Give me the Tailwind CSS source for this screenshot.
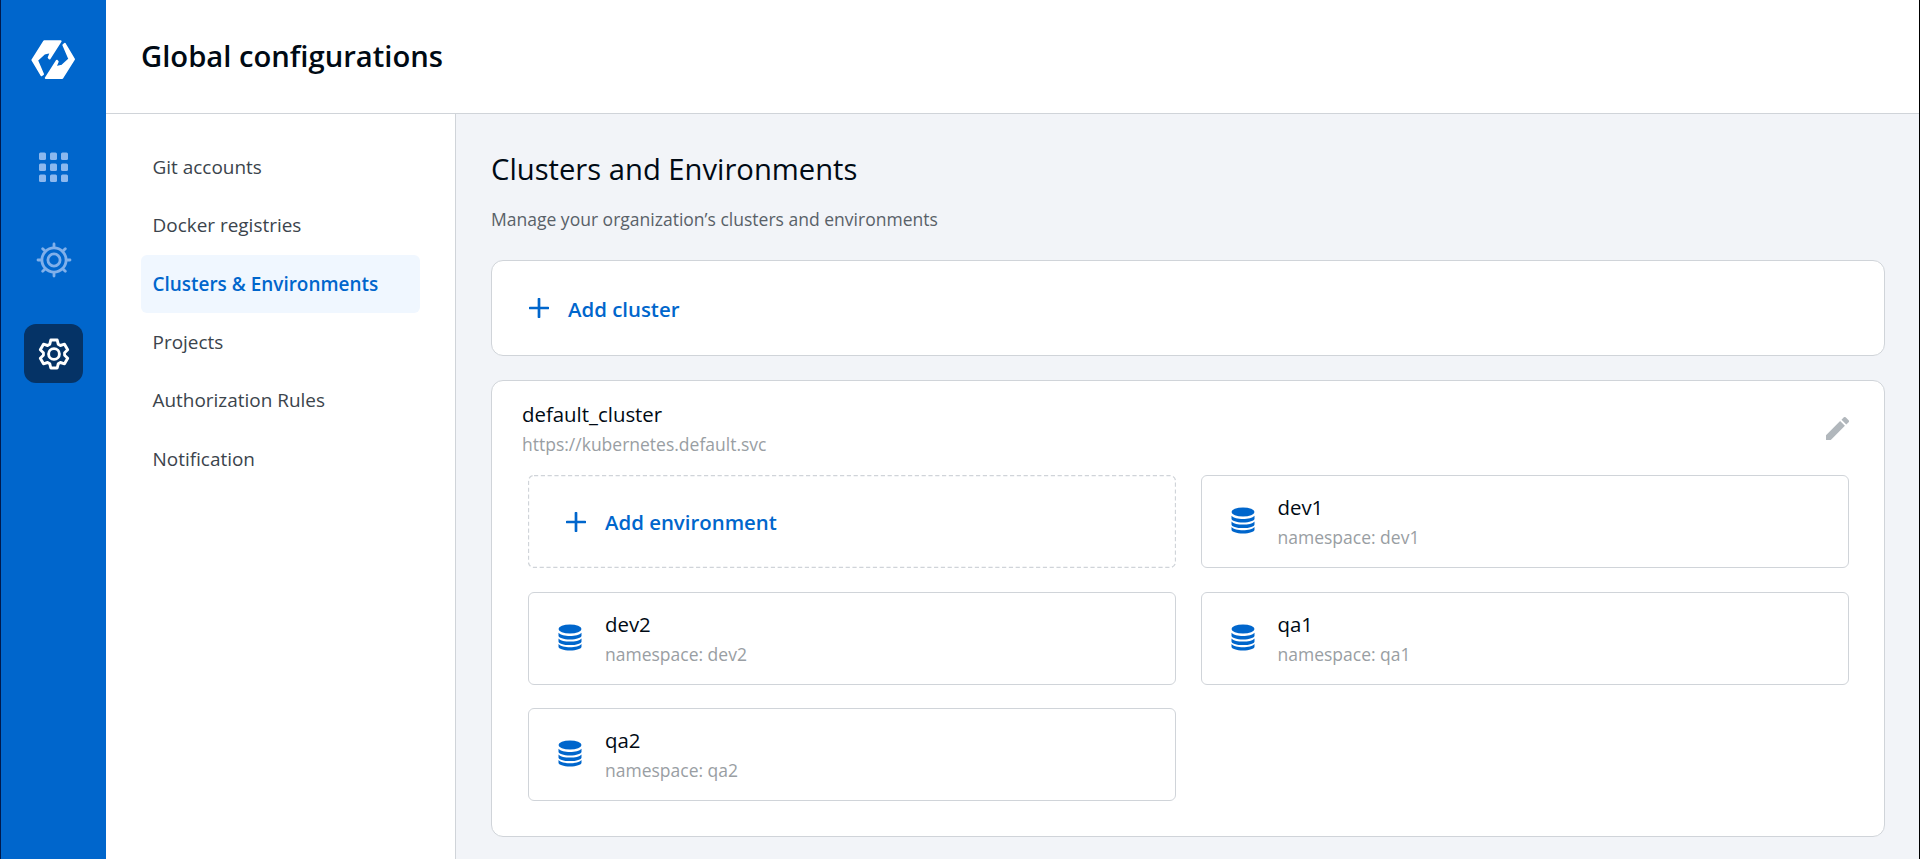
<!DOCTYPE html>
<html lang="en">
<head>
<meta charset="utf-8">
<title>Global configurations</title>
<script src="https://cdn.jsdelivr.net/npm/@tailwindcss/browser@4"></script>
</head>
<body class="flex h-[859px] w-[1920px] overflow-hidden border-l border-r border-l-[#001a4d] border-r-black bg-white font-['Open_Sans',sans-serif] text-[#000a14]">
  <svg class="hidden">
    <symbol id="db" viewBox="0 0 24 27">
      <ellipse cx="12" cy="5" rx="11.5" ry="4.6"/>
      <path d="M.5 8.8C2.5 11 7 12 12 12s9.500-1 11.500-3.200v3c0 2-5 3.700-11.500 3.700S.5 13.800.5 11.800z"/>
      <path d="M.5 14.400c2 2.200 6.500 3.200 11.500 3.200s9.500-1 11.500-3.200v3c0 2-5 3.700-11.500 3.700S.5 19.400.5 17.400z"/>
      <path d="M.5 20c2 2.200 6.500 3.200 11.500 3.200s9.500-1 11.500-3.200v2.800c0 2-5 3.700-11.500 3.700S.5 24.800.5 22.800z"/>
    </symbol>
    <symbol id="plus" viewBox="0 0 20 20">
      <path d="M10 1v18M1 10h18" fill="none" stroke="currentColor" stroke-width="2.700" stroke-linecap="round"/>
    </symbol>
  </svg>

  <aside class="flex w-[105px] shrink-0 flex-col items-center bg-[#0066cc]">
    <svg class="mt-[39px] mr-px h-[41px] w-[46px] shrink-0" viewBox="0 0 46 41" fill="#fff" stroke="#fff" stroke-width="2" stroke-linejoin="round">
      <path id="half" d="M14.200 2.200H30.600L19.600 19.500 18.700 18.600 21 13 14.400 14.500 7 21.200 13 35.200 11.500 36.300 2.400 21z"/>
      <use href="#half" transform="rotate(180 23.200 20.600)"/>
    </svg>
    <svg class="mt-[72px] h-[31px] w-[29px] shrink-0" viewBox="0 0 29 31" fill="#8cb8ee">
      <rect x="0" y="0.500" width="7" height="7.500" rx="1.500"/><rect x="11" y="0.500" width="7" height="7.500" rx="1.500"/><rect x="22" y="0.500" width="7" height="7.500" rx="1.500"/>
      <rect x="0" y="11.500" width="7" height="7.500" rx="1.500"/><rect x="11" y="11.500" width="7" height="7.500" rx="1.500"/><rect x="22" y="11.500" width="7" height="7.500" rx="1.500"/>
      <rect x="0" y="22.500" width="7" height="7.500" rx="1.500"/><rect x="11" y="22.500" width="7" height="7.500" rx="1.500"/><rect x="22" y="22.500" width="7" height="7.500" rx="1.500"/>
    </svg>
    <svg class="mt-[59px] h-9 w-9 shrink-0" viewBox="-18 -18 36 36" fill="none" stroke="#80b0ea" stroke-width="2.800" stroke-linecap="round">
      <circle r="12.100"/><circle r="6.100"/>
      <path d="M0-12.300V-16M0 12.300V16M-12.300 0H-16M12.300 0H16M8.700-8.700l2.600-2.600M-8.700-8.700l-2.600-2.600M8.700 8.700l2.600 2.600M-8.700 8.700l-2.600 2.600"/>
    </svg>
    <div class="mt-[46px] flex h-[59px] w-[59px] shrink-0 items-center justify-center rounded-xl bg-[#053366]">
      <svg class="h-9 w-9" viewBox="-18 -18 36 36" fill="none" stroke="#fff" stroke-width="2.900" stroke-linejoin="round">
        <circle r="5.400"/>
        <path d="M-3.200-14H3.200L4.200-9.800L6.400-8.500L10.500-9.800L13.700-4.200L10.600-1.300V1.300L13.700 4.200L10.500 9.800L6.400 8.500L4.200 9.800L3.200 14H-3.200L-4.200 9.800L-6.400 8.500L-10.500 9.800L-13.700 4.200L-10.600 1.300V-1.300L-13.700-4.200L-10.500-9.800L-6.400-8.500L-4.200-9.800Z"/>
      </svg>
    </div>
  </aside>

  <div class="flex min-w-0 grow flex-col">
    <header class="flex h-[114px] shrink-0 items-center border-b border-[#d0d4d9] pl-[35px]">
      <h1 class="text-[29.200px] font-semibold">Global configurations</h1>
    </header>
    <div class="flex min-h-0 grow">
      <nav class="flex w-[350px] shrink-0 flex-col border-r border-[#d0d4d9] px-[35px] pt-[24px] text-[18.950px] text-[#3b444c]">
        <a class="flex h-[58.300px] items-center pl-[11.500px]">Git accounts</a>
        <a class="flex h-[58.300px] items-center pl-[11.500px]">Docker registries</a>
        <a class="flex h-[58.300px] items-center rounded-md bg-[#f0f7ff] pl-[11.500px] pt-px font-semibold text-[#0066cc]">Clusters &amp; Environments</a>
        <a class="flex h-[58.300px] items-center pl-[11.500px]">Projects</a>
        <a class="flex h-[58.300px] items-center pl-[11.500px]">Authorization Rules</a>
        <a class="flex h-[58.300px] items-center pl-[11.500px] pt-px">Notification</a>
      </nav>
      <main class="flex grow flex-col bg-[#f2f4f8] pl-[35px] pr-[34px] pt-[34px]">
        <h2 class="text-[29.200px] leading-[42px]">Clusters and Environments</h2>
        <p class="mt-[15px] text-[17.520px] leading-[28px] text-[#596168]">Manage your organization’s clusters and environments</p>
        <section class="mt-[27px] flex h-[96px] shrink-0 items-center rounded-xl border border-[#d0d4d9] bg-white pl-[37px] text-[#0066cc]">
          <svg class="h-5 w-5"><use href="#plus"/></svg>
          <span class="ml-[19px] pt-0.5 text-[20.400px] font-semibold">Add cluster</span>
        </section>
        <section class="mt-6 h-[457px] shrink-0 rounded-xl border border-[#d0d4d9] bg-white">
          <div class="flex h-[94px] items-center justify-between pl-[30px] pr-[35.500px] pt-px">
            <div>
              <div class="text-[20.400px] leading-[30px]">default_cluster</div>
              <div class="text-[17.500px] leading-[30px] text-[#999ea3]">https://kubernetes.default.svc</div>
            </div>
            <svg class="mb-px h-[23px] w-[23px]" viewBox="3 3 18 18" fill="#b1b7bc"><path d="M3 17.250V21h3.750L17.810 9.940l-3.750-3.750L3 17.250zM20.710 7.040a1 1 0 0 0 0-1.410l-2.340-2.340a1 1 0 0 0-1.410 0l-1.830 1.830 3.750 3.750 1.830-1.830z"/></svg>
          </div>
          <div class="grid grid-cols-2 gap-x-[25px] gap-y-[23.500px] pr-[35px] pl-[36px]">
            <div class="relative flex h-[93px] items-center pl-[38px] text-[#0066cc]">
              <svg class="absolute inset-0 h-full w-full text-[#d0d4d9]"><rect x="0.5" y="0.5" width="647" height="92" rx="5.5" fill="none" stroke="currentColor" stroke-width="1.300" stroke-dasharray="4.200 2.600"/></svg>
              <svg class="h-5 w-5"><use href="#plus"/></svg>
              <span class="ml-[19px] pt-0.5 text-[20.400px] font-semibold">Add environment</span>
            </div>
            <div class="flex h-[93px] items-center rounded-md border border-[#d0d4d9] pl-[28.500px]">
              <svg class="mb-[2px] h-[27px] w-6" fill="#0066cc"><use href="#db"/></svg>
              <div class="ml-[23px]"><div class="text-[20.400px] leading-[30px]">dev1</div><div class="text-[17.500px] leading-[30px] text-[#999ea3]">namespace: dev1</div></div>
            </div>
            <div class="flex h-[93px] items-center rounded-md border border-[#d0d4d9] pl-[28.500px]">
              <svg class="mb-[2px] h-[27px] w-6" fill="#0066cc"><use href="#db"/></svg>
              <div class="ml-[23.500px] pt-px"><div class="text-[20.400px] leading-[30px]">dev2</div><div class="text-[17.500px] leading-[30px] text-[#999ea3]">namespace: dev2</div></div>
            </div>
            <div class="flex h-[93px] items-center rounded-md border border-[#d0d4d9] pl-[28.500px]">
              <svg class="mb-[2px] h-[27px] w-6" fill="#0066cc"><use href="#db"/></svg>
              <div class="ml-[23px] pt-px"><div class="text-[20.400px] leading-[30px]">qa1</div><div class="text-[17.500px] leading-[30px] text-[#999ea3]">namespace: qa1</div></div>
            </div>
            <div class="flex h-[93px] items-center rounded-md border border-[#d0d4d9] pl-[28.500px]">
              <svg class="mb-[2px] h-[27px] w-6" fill="#0066cc"><use href="#db"/></svg>
              <div class="ml-[23.500px] pt-px"><div class="text-[20.400px] leading-[30px]">qa2</div><div class="text-[17.500px] leading-[30px] text-[#999ea3]">namespace: qa2</div></div>
            </div>
          </div>
        </section>
      </main>
    </div>
  </div>
</body>
</html>
